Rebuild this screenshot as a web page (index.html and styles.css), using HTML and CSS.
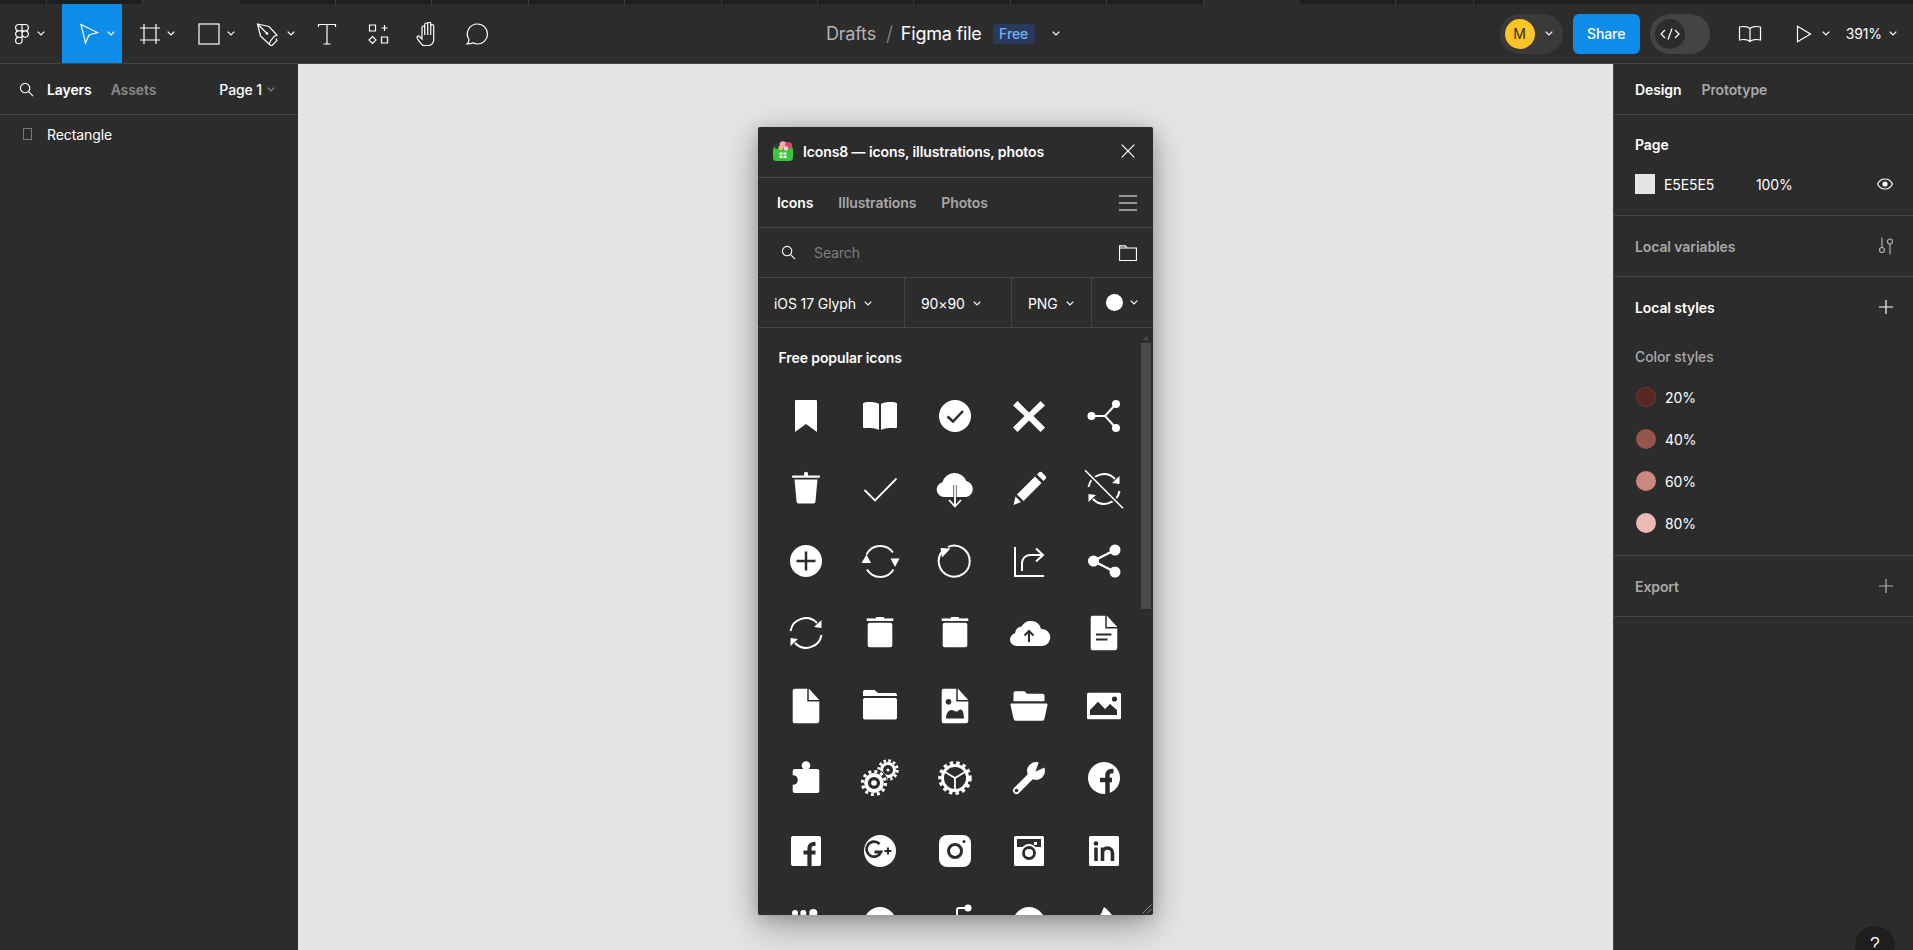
FILE: index.html
```html
<!doctype html>
<html lang="en">
<head>
    <meta charset="UTF-8">
    <meta name="viewport" content="width=device-width, initial-scale=1.0">
    <title>Figma file</title>
    <link rel="stylesheet" href="styles.css">
</head>
<body>
    <div class="tabstrip">
        <div class="tab tab--first"></div>
        <div class="tab"></div>
        <div class="tab tab--active"></div>
        <div class="tab"></div><div class="tab"></div><div class="tab"></div><div class="tab"></div>
        <div class="tab"></div><div class="tab"></div><div class="tab"></div><div class="tab"></div>
        <div class="tab"></div><div class="tab"></div>
        <div class="tab tab--active"></div>
        <div class="tab"></div>
        <div class="tab tab--short"></div>
    </div>

    <header class="toolbar">
        <div class="tools">
            <div class="tool tool--logo">
                <svg class="tool__icon" viewBox="0 0 24 24"><path class="line1" d="M12 2.500H8.800a3.200 3.200 0 0 0 0 6.400H12zM12 2.500h3.200a3.200 3.200 0 0 1 0 6.400H12zM12 8.900H8.800a3.200 3.200 0 0 0 0 6.400H12zM15.200 8.900a3.200 3.200 0 1 1 0 6.400 3.200 3.200 0 0 1 0-6.400zM12 15.300H8.800a3.200 3.200 0 1 0 3.200 3.200z"/></svg>
                <svg class="chev" viewBox="0 0 8 5"><path d="M.7.7 4 4 7.300.7"/></svg>
            </div>
            <div class="tool tool--on">
                <svg class="tool__icon" viewBox="0 0 24 24"><path class="line1" d="M5 2.500 21.500 10.500 13 13 9.500 21z"/></svg>
                <svg class="chev" viewBox="0 0 8 5"><path d="M.7.7 4 4 7.300.7"/></svg>
            </div>
            <div class="tool tool--frame">
                <svg class="tool__icon" viewBox="0 0 24 24"><path class="line1" d="M6 2v20M18 2v20M2 6h20M2 18h20"/></svg>
                <svg class="chev" viewBox="0 0 8 5"><path d="M.7.700 4 4 7.300.7"/></svg>
            </div>
            <div class="tool tool--rect">
                <svg class="tool__icon" viewBox="0 0 24 24"><rect class="line1" x="2" y="2" width="20" height="20"/></svg>
                <svg class="chev" viewBox="0 0 8 5"><path d="M.7.7 4 4 7.300.7"/></svg>
            </div>
            <div class="tool">
                <svg class="tool__icon" viewBox="0 0 24 24"><path class="line1" d="M1.500 2 13 4.500 21 13l-3 1.500-3.500 4.500-1.500 3-8.500-8zM1.500 2 10.500 11"/><circle cx="11" cy="11.500" r="1.300" fill="#fff"/><path class="line1" d="M13 22l2.500 2 5.500-5.500-1-2"/></svg>
                <svg class="chev" viewBox="0 0 8 5"><path d="M.7.7 4 4 7.300.7"/></svg>
            </div>
            <div class="tool tool--plain">
                <svg class="tool__icon" viewBox="0 0 24 24"><path class="line1" d="M3.500 5V2.500h17V5M12 2.500v19.500M8.500 22h7"/></svg>
            </div>
            <div class="tool tool--plain tool--comps">
                <svg class="tool__icon" viewBox="0 0 24 24"><path class="line1" d="M3.500 3h6v6h-6zM15.500 6h6M18.500 3v6M6.500 14.500l3.500 3.500-3.500 3.500L3 18zM15.500 15h6v6h-6z"/></svg>
            </div>
            <div class="tool tool--plain tool--hand">
                <svg class="tool__icon" viewBox="0 0 24 24"><path class="line1" d="M6 23.500c-2-2-5-5.500-5.800-7.500-.6-1.500 1-2.700 2.300-1.500L5 17V5.500c0-2 2.700-2 2.700 0V13 2.500c0-2 3-2 3 0V13 1.500c0-1.800 3-1.800 3 0V13 4c0-1.800 3-1.800 3 0v14c0 3-2.500 5.500-5 5.500z"/></svg>
            </div>
            <div class="tool tool--plain">
                <svg class="tool__icon" viewBox="0 0 24 24"><path class="line1" d="M12.500 2a10 10 0 0 1 0 20c-1.800 0-3.200-.4-4.500-1.200-1.500 1-4 1.200-6 1.200 1-1 2-2.500 2-4.500A10 10 0 0 1 12.500 2z"/></svg>
            </div>
        </div>

        <div class="doc">
            <span class="doc__folder">Drafts</span>
            <span class="doc__slash">/</span>
            <span class="doc__name">Figma file</span>
            <span class="doc__badge">Free</span>
            <svg class="chev doc__chev" viewBox="0 0 8 5"><path d="M.7.7 4 4 7.300.7"/></svg>
        </div>

        <div class="actions">
            <div class="pill">
                <span class="avatar">M</span>
                <svg class="chev" viewBox="0 0 8 5"><path d="M.7.7 4 4 7.300.7"/></svg>
            </div>
            <button class="share">Share</button>
            <div class="toggle">
                <span class="toggle__knob">
                    <svg viewBox="0 0 20 14"><path class="line1" d="M5 3 1 7l4 4M15 3l4 4-4 4M12 1.500 8 12.500"/></svg>
                </span>
            </div>
            <svg class="book" viewBox="0 0 24 18"><path class="line1" d="M12 3.500C10 1.500 5 1 1.500 2v13c3.500-1 8.500-.5 10.500 1.500C14 14.500 19 14 22.500 15V2C19 1 14 1.500 12 3.500zM12 3.500v13"/></svg>
            <svg class="play" viewBox="0 0 16 18"><path class="line1" d="M1.500 1.200 14.500 9 1.500 16.800z"/></svg>
            <svg class="chev play__chev" viewBox="0 0 8 5"><path d="M.7.7 4 4 7.300.7"/></svg>
            <span class="zoomval">391%</span>
            <svg class="chev" viewBox="0 0 8 5"><path d="M.7.7 4 4 7.300.7"/></svg>
        </div>
    </header>

    <div class="main">
        <aside class="left">
            <div class="left__tabs">
                <svg class="left__search" viewBox="0 0 16 16"><circle class="line1" cx="6.500" cy="6.500" r="5"/><path class="line1" d="m10 10 5 5"/></svg>
                <span class="tab-on">Layers</span>
                <span class="tab-off">Assets</span>
                <span class="left__page">Page 1</span>
                <svg class="chev chev--dim" viewBox="0 0 8 5"><path d="M.7.7 4 4 7.300.7"/></svg>
            </div>
            <div class="layer">
                <span class="layer__icon"></span>
                <span>Rectangle</span>
            </div>
        </aside>

        <main class="canvas">
            <section class="plugin">
                <div class="plugin__row plugin__row--head">
                    <svg class="plugin__logo" viewBox="0 0 20 20">
                        <rect x="0" y="5" width="20" height="15" rx="3.500" fill="#38c63c"/>
                        <circle cx="4.500" cy="4.500" r="3.400" fill="#2b3a4a"/>
                        <circle cx="10" cy="3.500" r="3.300" fill="#f5a7c4"/>
                        <circle cx="15.500" cy="4.500" r="3.600" fill="#e0426a"/>
                        <circle cx="7.500" cy="7" r="2.200" fill="#f4c542"/>
                        <circle cx="13" cy="7.500" r="2.200" fill="#f0dcd0"/>
                        <path d="M6.500 11.500h7v5.500h-7z" fill="#fff"/>
                        <path d="M10 11v6.500M6 14.200h8" stroke="#38c63c" stroke-width="1"/>
                    </svg>
                    <span class="plugin__title">Icons8 — icons, illustrations, photos</span>
                    <svg class="plugin__close" viewBox="0 0 14 14"><path class="line1" d="m.7.7 12.600 12.600M13.300.7.7 13.300"/></svg>
                </div>
                <div class="plugin__row plugin__row--tabs">
                    <span class="tab-on">Icons</span>
                    <span class="tab-off">Illustrations</span>
                    <span class="tab-off">Photos</span>
                    <svg class="plugin__end" viewBox="0 0 18 16"><path class="line1" d="M0 1h18M0 8h18M0 15h18"/></svg>
                </div>
                <div class="plugin__row plugin__row--search">
                    <svg class="plugin__glass" viewBox="0 0 16 16"><circle class="line1" cx="6.500" cy="6.500" r="5"/><path class="line1" d="m10 10 5 5"/></svg>
                    <span class="plugin__placeholder">Search</span>
                    <svg class="plugin__end" viewBox="0 0 18 16"><path class="line1" d="M.5 3V.8h6L8 3h9.500v12.500H.5zM.5 3H8"/></svg>
                </div>
                <div class="plugin__row plugin__row--filters">
                    <div class="filter filter--style">iOS 17 Glyph <svg class="chev" viewBox="0 0 8 5"><path d="M.7.7 4 4 7.300.7"/></svg></div>
                    <div class="filter filter--size">90×90 <svg class="chev" viewBox="0 0 8 5"><path d="M.7.7 4 4 7.300.7"/></svg></div>
                    <div class="filter filter--format">PNG <svg class="chev" viewBox="0 0 8 5"><path d="M.7.7 4 4 7.300.7"/></svg></div>
                    <div class="filter filter--color"><span class="dot"></span><svg class="chev" viewBox="0 0 8 5"><path d="M.7.7 4 4 7.300.7"/></svg></div>
                </div>

                <div class="list">
                    <h2 class="list__title">Free popular icons</h2>
                    <div class="grid">
                        <svg viewBox="0 0 36 36"><path d="M8 2h20a1 1 0 0 1 1 1v31L18 26 7 34V3a1 1 0 0 1 1-1z"/></svg>
                        <svg viewBox="0 0 36 36"><path d="M2.500 4.500c5-.8 11-.5 14.500 1.500v26c-3.500-2-9.500-2.300-14.500-1.700A1.500 1.500 0 0 1 1 29V6a1.500 1.500 0 0 1 1.500-1.500zM33.500 4.500c-5-.8-11-.5-14.500 1.500v26c3.500-2 9.500-2.300 14.500-1.700A1.500 1.500 0 0 0 35 29V6a1.500 1.500 0 0 0-1.500-1.500z"/></svg>
                        <svg viewBox="0 0 36 36"><circle cx="18" cy="18" r="16"/><path class="cut" d="m10.500 18.500 5.500 5 10-10.500" stroke-width="2.500"/></svg>
                        <svg viewBox="0 0 36 36"><path d="m6.500 3 11.500 11.500L29.500 3l4.500 4.500L22.500 18 34 29.500 29.500 34 18 22.500 6.500 34 2 29.500 13.500 18 2 7.500z"/></svg>
                        <svg viewBox="0 0 36 36"><circle cx="5.500" cy="18" r="4"/><circle cx="30" cy="6" r="4"/><circle cx="30" cy="30" r="4"/><path class="stroke" d="M5.500 18H19l11-12M19 18l11 12" stroke-width="2"/></svg>

                        <svg viewBox="0 0 36 36"><g transform="translate(0 -1)"><path d="M5 5.500h11V3.800a2 2 0 0 1 4 0v1.700h11a.8.800 0 0 1 0 2.200H5a.8.800 0 0 1 0-2.200zM6.500 9.500h23L27.500 31a2.500 2.500 0 0 1-2.500 2.500H11A2.500 2.500 0 0 1 8.500 31z"/></g></svg>
                        <svg viewBox="0 0 36 36"><path class="stroke" d="m2.500 19 10.500 10.500L34.500 7.500" stroke-width="1.800"/></svg>
                        <svg viewBox="0 0 36 36"><path d="M7 26.500A7.500 7.500 0 0 1 5.500 11.700 12.500 12.500 0 0 1 29.200 10.500 8.200 8.200 0 0 1 29.500 26.500z" transform="translate(0 -.5)"/><path class="cut" d="M18 14v20" stroke-width="3.200"/><path class="cut" d="M10 27.500h16" stroke-width="2"/><path class="stroke" d="M18 13v22M12 29l6 6.500 6-6.500" stroke-width="1.800"/></svg>
                        <svg viewBox="0 0 36 36"><path d="M6 23.500 24 5.500l6.500 6.500-18 18zM26 3.500l1.800-1.800a2.500 2.500 0 0 1 3.500 0l3 3a2.500 2.500 0 0 1 0 3.500L32.500 10zM4.500 25.500 10 31l-7.500 3z"/></svg>
                        <svg viewBox="0 0 36 36"><path class="stroke" d="M2.500 16a15.500 15.500 0 0 1 26.500-8M33.500 20a15.500 15.500 0 0 1-26.500 8" stroke-width="2"/><path d="m26 12 7.500 1V5zM10 24l-7.500-1v8z"/><path class="cut" d="m-1-.7 38 38" stroke-width="5"/><path class="stroke" d="m-1-.7 38 38" stroke-width="1.600"/></svg>

                        <svg viewBox="0 0 36 36"><circle cx="18" cy="18" r="16"/><path class="cut" d="M18 8.500v19M8.500 18h19" stroke-width="2.500"/></svg>
                        <svg viewBox="0 0 36 36"><path class="stroke" d="M4.500 11.500A15.500 15.500 0 0 1 31 9.500M31.500 26.500A15.500 15.500 0 0 1 5 26.500" stroke-width="2"/><path d="m28.500 15.500h9L33 24zM-.5 20h9.500L4.500 11.500z"/></svg>
                        <svg viewBox="0 0 36 36"><path class="stroke" d="M11 4a15.500 15.500 0 1 1-5 3.500" stroke-width="2"/><path d="m3.500 5 10 .5-8.500 9z"/></svg>
                        <svg viewBox="0 0 36 36"><path class="stroke" d="M4 4v29h29M11 28v-8a8 8 0 0 1 8-8h12" stroke-width="2"/><path class="stroke" d="m25 5.500 7 6.500-7 6.500" stroke-width="2"/></svg>
                        <svg viewBox="0 0 36 36"><circle cx="7.500" cy="18" r="5.500"/><circle cx="29" cy="7" r="5.500"/><circle cx="29" cy="29" r="5.500"/><path class="stroke" d="M29 7 7.500 18 29 29" stroke-width="2.500"/></svg>

                        <svg viewBox="0 0 36 36"><path class="stroke" d="M2.500 16a15.500 15.500 0 0 1 26.500-8M33.500 20a15.500 15.500 0 0 1-26.500 8" stroke-width="2"/><path d="m26 12 7.500 1V5zM10 24l-7.500-1v8z"/></svg>
                        <svg viewBox="0 0 36 36"><rect x="14" y="2" width="8" height="2"/><rect x="4.700" y="3.400" width="26.600" height="2.600"/><rect x="5.700" y="7.800" width="24.600" height="24.500" rx="2"/></svg>
                        <svg viewBox="0 0 36 36"><rect x="14" y="2" width="8" height="2"/><rect x="4.700" y="3.400" width="26.600" height="2.600"/><rect x="5.700" y="7.800" width="24.600" height="24.500" rx="2"/></svg>
                        <svg viewBox="0 0 36 36"><path d="M6 31A6.500 6.500 0 0 1 4 18.200 7.500 7.500 0 0 1 10.500 11.500 10.500 10.500 0 0 1 30 14a8.500 8.500 0 0 1 1.500 17z"/><path class="cut" d="M18 27V16.500M13.500 20.500 18 16l4.500 4.500" stroke-width="2"/></svg>
                        <svg viewBox="0 0 36 36"><path d="M6.500.7H21l10.300 11.300V33a2.300 2.300 0 0 1-2.300 2.300H6.500A2 2 0 0 1 4.700 33V3A2 2 0 0 1 6.500.7z"/><path class="cut" d="M20 0v12.700h12" stroke-width="1.500"/><path class="cut" d="M10 19.500h15.500M10 24.500h11.500" stroke-width="1.800"/></svg>

                        <svg viewBox="0 0 36 36"><path d="M6.500.7H21l10.300 11.300V33a2.300 2.300 0 0 1-2.300 2.300H6.500A2 2 0 0 1 4.700 33V3A2 2 0 0 1 6.500.7z"/><path class="cut" d="M20 0v12.700h12" stroke-width="1.500"/></svg>
                        <svg viewBox="0 0 36 36"><path d="M2.800 2h9.700l3.500 3h17a2 2 0 0 1 2 2v1H1V4a2 2 0 0 1 1.800-2z"/><rect x="1" y="10" width="34" height="21.500" rx="2"/></svg>
                        <svg viewBox="0 0 36 36"><path d="M6.500.7H21l10.300 11.300V33a2.300 2.300 0 0 1-2.300 2.300H6.500A2 2 0 0 1 4.700 33V3A2 2 0 0 1 6.500.7z"/><path class="cut" d="M20 0v12.700h12" stroke-width="1.500"/><circle class="hole" cx="11.500" cy="13.700" r="2.800"/><path class="hole" d="M9 30.500c0-4 2-8.500 5.500-8.500 2 0 3 1.500 5 1.500s2-2 4-2c2.500 0 3.500 5 3.500 9z"/></svg>
                        <svg viewBox="0 0 36 36"><path d="M4.500 3.300h9l2.500 2.500h15.500A2 2 0 0 1 33.500 8v5.200h-31V5.300a2 2 0 0 1 2-2zM.5 15.500h35a1 1 0 0 1 1 1.200L33.500 30.500a2.500 2.500 0 0 1-2.500 2.200H5a2.500 2.500 0 0 1-2.500-2.200L-.5 16.700a1 1 0 0 1 1-1.200z"/></svg>
                        <svg viewBox="0 0 36 36"><rect x="1" y="4.700" width="34" height="26.600" rx="1.500"/><circle class="hole" cx="28.500" cy="11" r="2.600"/><path class="hole" d="M4 27v-5l8-8.300 7 7.300 5-5 7 6v5z"/></svg>

                        <svg viewBox="0 0 36 36"><circle cx="18" cy="5.500" r="4.300"/><rect x="4.700" y="9" width="26.600" height="24" rx="2"/><circle class="hole" cx="5" cy="20" r="4.800"/></svg>
                        <svg viewBox="0 0 36 36"><circle class="stroke" cx="26" cy="10" r="6.500" stroke-width="3"/><circle class="stroke" cx="26" cy="10" r="9.300" stroke-width="2.800" stroke-dasharray="2.600 2.270"/><circle cx="26" cy="10" r="1.500"/><circle class="hole" cx="12" cy="23" r="14"/><circle class="stroke" cx="12" cy="23" r="8" stroke-width="3.800"/><circle class="stroke" cx="12" cy="23" r="11.500" stroke-width="3.200" stroke-dasharray="3 3.020"/><circle cx="12" cy="23" r="2.800"/></svg>
                        <svg viewBox="0 0 36 36"><circle class="stroke" cx="18" cy="18" r="12.500" stroke-width="3"/><circle class="stroke" cx="18" cy="18" r="15" stroke-width="3.500" stroke-dasharray="3.400 3.100"/><path class="stroke" d="M18 18 8 12M18 18l10-6M18 18v12" stroke-width="1.800"/></svg>
                        <svg viewBox="0 0 36 36"><path class="stroke" d="M5.500 30.500 22 14" stroke-width="7" stroke-linecap="round"/><circle cx="25" cy="11" r="9"/><path class="hole" d="M24.500 11.500 29-1l9 6.500z"/><circle class="hole" cx="5.500" cy="30.500" r="1.800"/></svg>
                        <svg viewBox="0 0 36 36"><circle cx="18" cy="18" r="16"/><path class="cut" d="M21.500 36V15a4 4 0 0 1 4-4h2M14 20h12" stroke-width="4.500"/></svg>

                        <svg viewBox="0 0 36 36"><rect x="3" y="3" width="30" height="30" rx="2"/><path class="cut" d="M21.500 33V15a4 4 0 0 1 4-4h2M15.500 19.500h12" stroke-width="4.200"/></svg>
                        <svg viewBox="0 0 36 36"><circle cx="18" cy="18" r="16"/><path class="cut" d="M17.500 11a7.500 7.500 0 1 0 1.500 8H12.500" stroke-width="2.800"/><path class="cut" d="M22.500 18h7M26 14.500v7" stroke-width="2"/></svg>
                        <svg viewBox="0 0 36 36"><rect x="2" y="2" width="32" height="32" rx="8"/><circle class="cut" cx="18" cy="18" r="6.500" stroke-width="3"/><circle class="hole" cx="27" cy="8.500" r="1.500"/></svg>
                        <svg viewBox="0 0 36 36"><rect x="3" y="3" width="30" height="30" rx="1.500"/><path class="hole" d="M6 6h24v6h-4v-3h-3v3h7v2H6z" fill-rule="evenodd"/><circle cx="18" cy="19" r="8"/><circle class="cut" cx="18" cy="20" r="5.500" stroke-width="2.800"/></svg>
                        <svg viewBox="0 0 36 36"><rect x="3" y="3" width="30" height="30" rx="1.500"/><circle class="hole" cx="10" cy="10.500" r="2.300"/><path class="cut" d="M10 14.500V28M16.500 14.500V28M16.500 20a5 5 0 0 1 10 0v8" stroke-width="3.600"/></svg>

                        <svg viewBox="0 0 36 36"><circle cx="7" cy="8" r="3"/><circle cx="15.300" cy="8" r="3"/><circle cx="25.300" cy="8" r="4"/><rect x="5" y="14" width="26" height="16" rx="4"/></svg>
                        <svg viewBox="0 0 36 36"><circle cx="18" cy="18" r="16"/></svg>
                        <svg viewBox="0 0 36 36"><circle cx="31" cy="3" r="3.500"/><path class="stroke" d="M31 3h-9a2 2 0 0 0-2 2v12" stroke-width="2"/></svg>
                        <svg viewBox="0 0 36 36"><circle cx="18" cy="18" r="16"/></svg>
                        <svg viewBox="0 0 36 36"><path d="M18 2c4 3 9 8 11 14H4l3-5c3 0 7 0 8-2z"/></svg>
                    </div>
                    <div class="scroll">
                        <span class="scroll__up"></span>
                        <span class="scroll__thumb"></span>
                    </div>
                </div>
                <svg class="grip" viewBox="0 0 10 10"><path d="M9.500.5.500 9.500M9.500 5 5 9.500" stroke="#8a8a8a" stroke-width="1" fill="none"/></svg>
            </section>
        </main>

        <aside class="right">
            <div class="right__tabs">
                <span class="tab-on">Design</span>
                <span class="tab-off">Prototype</span>
            </div>
            <section class="block block--page">
                <h3 class="block__title">Page</h3>
                <div class="pagefill">
                    <span class="pagefill__swatch"></span>
                    <span class="pagefill__hex">E5E5E5</span>
                    <span class="pagefill__pct">100%</span>
                    <svg class="pagefill__eye" viewBox="0 0 16 12"><path d="M.5 6C2 3 5 1 8 1s6 2 7.500 5C14 9 11 11 8 11S2 9 .5 6z" fill="none" stroke="#fff" stroke-width="1.200"/><circle cx="8" cy="6" r="2.600" fill="#fff"/></svg>
                </div>
            </section>
            <section class="block block--row">
                <h3 class="block__title block__title--dim">Local variables</h3>
                <svg class="block__icon block__icon--vars" viewBox="0 0 16 18"><path class="line1 line1--dim" d="M4 .5v10M12 7v10.500"/><circle class="line1 line1--dim" cx="4" cy="13" r="2.500"/><circle class="line1 line1--dim" cx="12" cy="4.500" r="2.500"/></svg>
            </section>
            <section class="block block--styles">
                <div class="block__head">
                    <h3 class="block__title">Local styles</h3>
                    <svg class="block__icon" viewBox="0 0 14 14"><path class="line1" d="M7 0v14M0 7h14"/></svg>
                </div>
                <div class="styles__label">Color styles</div>
                <div class="style"><span class="style__dot style__dot--20"></span>20%</div>
                <div class="style"><span class="style__dot style__dot--40"></span>40%</div>
                <div class="style"><span class="style__dot style__dot--60"></span>60%</div>
                <div class="style"><span class="style__dot style__dot--80"></span>80%</div>
            </section>
            <section class="block block--row">
                <h3 class="block__title block__title--dim">Export</h3>
                <svg class="block__icon" viewBox="0 0 14 14"><path class="line1 line1--dim" d="M7 0v14M0 7h14"/></svg>
            </section>
            <div class="help">?</div>
        </aside>
    </div>
</body>
</html>
```

FILE: styles.css
```css
*, ::before, ::after {
    padding: 0;
    margin: 0;
    box-sizing: border-box;
    font-family: 'Inter', 'Roboto', sans-serif;
    letter-spacing: -.1px;
}
body {
    width: 1913px;
    height: 950px;
    overflow: hidden;
    background: #2c2c2c;
    color: #ffffff;
    font-size: 14px;
}
h2, h3 {
    font-size: 14px;
    font-weight: 600;
}
.line1 {
    fill: none;
    stroke: #ffffff;
    stroke-width: 1.2;
}
.line1--dim {
    stroke: #b0b0b0;
}
.chev {
    width: 8px;
    height: 5px;
    flex: none;
}
.chev path {
    fill: none;
    stroke: #ffffff;
    stroke-width: 1.2;
}
.chev--dim path {
    stroke: #8a8a8a;
}

/* browser tabs cut off at the top */
.tabstrip {
    height: 4px;
    display: flex;
    background: #1e1e1e;
}
.tab {
    width: 96.4px;
    flex: none;
    border-right: 1px solid #3d3d3d;
}
.tab--first {
    width: 46.9px;
}
.tab--short {
    width: 77.3px;
}
.tab--active {
    background: #2c2c2c;
    border-right: none;
}

.toolbar {
    height: 60px;
    display: flex;
    align-items: center;
    border-bottom: 1px solid #444444;
}
.tools {
    display: flex;
    height: 59px;
    flex: none;
}
.tool {
    width: 60px;
    display: flex;
    align-items: center;
    padding-left: 8px;
}
.tool--logo {
    width: 62px;
    padding-left: 7px;
}
.tool--logo .tool__icon {
    width: 30px;
    margin-right: 0;
}
.tool--on {
    background: #0d8ce9;
}
.tool--frame {
    padding-left: 10px;
}
.tool--frame .tool__icon {
    margin-right: -1px;
}
.tool--rect {
    padding-left: 9px;
}
.tool--rect .tool__icon {
    margin-right: 0;
}
.tool--plain {
    width: 50px;
    padding-left: 7px;
}
.tool--comps {
    padding-left: 8px;
}
.tool--hand {
    padding-left: 9px;
}
.tool__icon {
    width: 36px;
    height: 24px;
    flex: none;
    margin-right: 1px;
}
.tool--plain .tool__icon {
    margin: 0;
}

.doc {
    display: flex;
    align-items: center;
    margin-left: 324px;
    font-size: 18px;
}
.doc__folder {
    color: #b3b3b3;
    letter-spacing: -.2px;
}
.doc__name {
    letter-spacing: -.2px;
}
.doc__slash {
    color: #8a8a8a;
    margin: 0 8px 0 10px;
    font-size: 20px;
    font-weight: 300;
}
.doc__badge {
    width: 42px;
    height: 20px;
    line-height: 20px;
    text-align: center;
    margin-left: 11px;
    background: #2b3a5c;
    color: #6db5f5;
    border-radius: 4px;
    font-size: 14px;
    font-weight: 500;
}
.doc__chev {
    margin-left: 17px;
}

.actions {
    margin-left: auto;
    padding-right: 16px;
    display: flex;
    align-items: center;
}
.pill {
    width: 63px;
    height: 40px;
    padding-left: 5px;
    display: flex;
    align-items: center;
    background: #3a3a3a;
    border-radius: 20px;
}
.avatar {
    width: 30px;
    height: 30px;
    margin-right: 10px;
    border-radius: 50%;
    background: #fcc425;
    color: #2c2c2c;
    text-align: center;
    line-height: 30px;
    font-size: 14px;
}
.share {
    width: 67px;
    height: 40px;
    margin-left: 10px;
    border: none;
    border-radius: 6px;
    background: #0d8ce9;
    color: #ffffff;
    font-size: 14px;
    font-weight: 500;
}
.toggle {
    width: 60px;
    height: 40px;
    margin-left: 10px;
    padding: 5px;
    border-radius: 20px;
    background: #444444;
}
.toggle__knob {
    width: 30px;
    height: 30px;
    display: flex;
    align-items: center;
    justify-content: center;
    border-radius: 50%;
    background: #2c2c2c;
}
.toggle__knob svg {
    width: 20px;
    height: 14px;
}
.book {
    width: 24px;
    height: 18px;
    margin-left: 28px;
}
.play {
    width: 16px;
    height: 18px;
    margin-left: 34px;
}
.play__chev {
    margin-left: 10px;
}
.zoomval {
    margin: 0 7px 0 16px;
}

.main {
    height: 886px;
    display: flex;
}
.left {
    width: 298px;
    flex: none;
    background: #2c2c2c;
}
.left__tabs {
    height: 51px;
    display: flex;
    align-items: center;
    border-bottom: 1px solid #444444;
    padding-left: 19px;
}
.left__search {
    width: 15px;
    height: 15px;
    margin-right: 13px;
}
.tab-on {
    font-weight: 600;
    color: #ffffff;
}
.tab-off {
    font-weight: 600;
    color: #a8a8a8;
}
.left__tabs .tab-off {
    margin-left: 19px;
    color: #8a8a8a;
}
.left__page {
    margin-left: 63px;
    font-weight: 500;
    margin-right: 5px;
}
.layer {
    height: 38px;
    display: flex;
    align-items: center;
    padding-left: 23px;
}
.layer__icon {
    width: 9px;
    height: 12px;
    margin-right: 15px;
    border: 1px solid #777777;
}

.canvas {
    flex: 1;
    position: relative;
    background: #e5e5e5;
}

/* floating plugin window */
.plugin {
    position: absolute;
    left: 460px;
    top: 63px;
    width: 395px;
    height: 788px;
    display: flex;
    flex-direction: column;
    background: #2c2c2c;
    border-radius: 2px;
    box-shadow: 0 2px 14px rgba(0, 0, 0, .15), 0 10px 36px rgba(0, 0, 0, .35);
    overflow: hidden;
}
.plugin__row {
    height: 50px;
    flex: none;
    display: flex;
    align-items: center;
    border-bottom: 1px solid #444444;
}
.plugin__row--head {
    height: 51px;
    padding-left: 15px;
    padding-bottom: 2px;
}
.plugin__logo {
    width: 20px;
    height: 20px;
    margin-right: 10px;
}
.plugin__title {
    font-weight: 600;
}
.plugin__close {
    width: 14px;
    height: 14px;
    margin-left: auto;
    margin-right: 18px;
}
.plugin__end {
    width: 18px;
    height: 16px;
    margin-left: auto;
    margin-right: 16px;
}
.plugin__row--tabs {
    padding-left: 19px;
}
.plugin__row--tabs .tab-off {
    margin-left: 25px;
}
.plugin__row--search {
    padding-left: 23px;
}
.plugin__glass {
    width: 15px;
    height: 15px;
    margin-right: 18px;
}
.plugin__placeholder {
    color: #7f7f7f;
}
.plugin__row--filters {
    align-items: stretch;
}
.filter {
    display: flex;
    align-items: center;
    gap: 8px;
    padding-top: 1px;
    border-right: 1px solid #444444;
    color: #ffffff;
}
.filter--style {
    width: 147px;
    padding-left: 16px;
}
.filter--size {
    width: 107px;
    padding-left: 16px;
}
.filter--format {
    width: 80px;
    padding-left: 16px;
}
.filter--color {
    flex: 1;
    padding-left: 14px;
    padding-top: 0;
    border-right: none;
    gap: 7px;
}
.dot {
    width: 17px;
    height: 17px;
    border-radius: 50%;
    background: #ffffff;
}

.list {
    flex: 1;
    position: relative;
    overflow: hidden;
    padding: 21px 0 0 10.5px;
}
.list__title {
    padding-left: 10px;
    height: 17px;
    line-height: 17px;
}
.grid {
    margin-top: 14px;
    display: grid;
    grid-template-columns: repeat(5, 74.500px);
    grid-auto-rows: 72.400px;
    justify-items: center;
    align-items: center;
}
.grid svg {
    width: 36px;
    height: 36px;
    overflow: visible;
    fill: #ffffff;
}
.grid .stroke {
    fill: none;
    stroke: #ffffff;
}
.grid .cut {
    fill: none;
    stroke: #2c2c2c;
}
.grid .hole {
    fill: #2c2c2c;
}
.scroll {
    position: absolute;
    top: 0;
    right: 2px;
    bottom: 0;
    width: 10px;
}
.scroll__up {
    display: block;
    width: 0;
    margin: 8px auto 0;
    border: 3px solid transparent;
    border-top: none;
    border-bottom: 4px solid #4a4a4a;
}
.scroll__thumb {
    display: block;
    height: 266px;
    margin-top: 3px;
    background: #4a4a4a;
}
.grip {
    position: absolute;
    right: 1px;
    bottom: 1px;
    width: 10px;
    height: 10px;
}

.right {
    width: 300px;
    flex: none;
    position: relative;
    overflow: hidden;
    background: #2c2c2c;
    border-left: 1px solid #444444;
}
.right__tabs {
    height: 51px;
    display: flex;
    align-items: center;
    padding-left: 21px;
    border-bottom: 1px solid #444444;
}
.right__tabs .tab-off {
    margin-left: 20px;
}
.block {
    border-bottom: 1px solid #444444;
    padding: 0 18px 0 21px;
}
.block--page {
    height: 101px;
    padding-top: 21px;
}
.block__title--dim {
    color: #a8a8a8;
}
.pagefill {
    display: flex;
    align-items: center;
    height: 20px;
    margin-top: 21px;
}
.pagefill__swatch {
    width: 20px;
    height: 20px;
    margin-right: 9px;
    background: #e5e5e5;
}
.pagefill__hex {
    width: 92px;
}
.pagefill__eye {
    width: 16px;
    height: 12px;
    margin-left: auto;
    margin-right: 2px;
}
.block--row {
    height: 61px;
    display: flex;
    align-items: center;
    justify-content: space-between;
}
.block__icon {
    width: 14px;
    height: 16px;
    margin-right: 2px;
}
.block__icon--vars {
    width: 16px;
    height: 18px;
    margin-right: 1px;
}
.block--styles {
    height: 279px;
}
.block__head {
    height: 60px;
    display: flex;
    align-items: center;
    justify-content: space-between;
}
.styles__label {
    height: 20px;
    margin-top: 10px;
    line-height: 20px;
    color: #a8a8a8;
    font-weight: 500;
}
.style {
    height: 42px;
    display: flex;
    align-items: center;
    padding-left: 1px;
}
.styles__label + .style {
    margin-top: 9px;
}
.style__dot {
    width: 20px;
    height: 20px;
    margin-right: 9px;
    border-radius: 50%;
}
.style__dot--20 {
    background: #5a2720;
    border: 1px solid #6e3a32;
}
.style__dot--40 {
    background: #97564b;
}
.style__dot--60 {
    background: #cb897d;
}
.style__dot--80 {
    background: #ecbab2;
}
.help {
    position: absolute;
    top: 862px;
    right: 18px;
    width: 40px;
    height: 40px;
    border-radius: 50%;
    background: #1e1e1e;
    text-align: center;
    line-height: 38px;
    font-size: 20px;
    font-weight: 300;
}
```
